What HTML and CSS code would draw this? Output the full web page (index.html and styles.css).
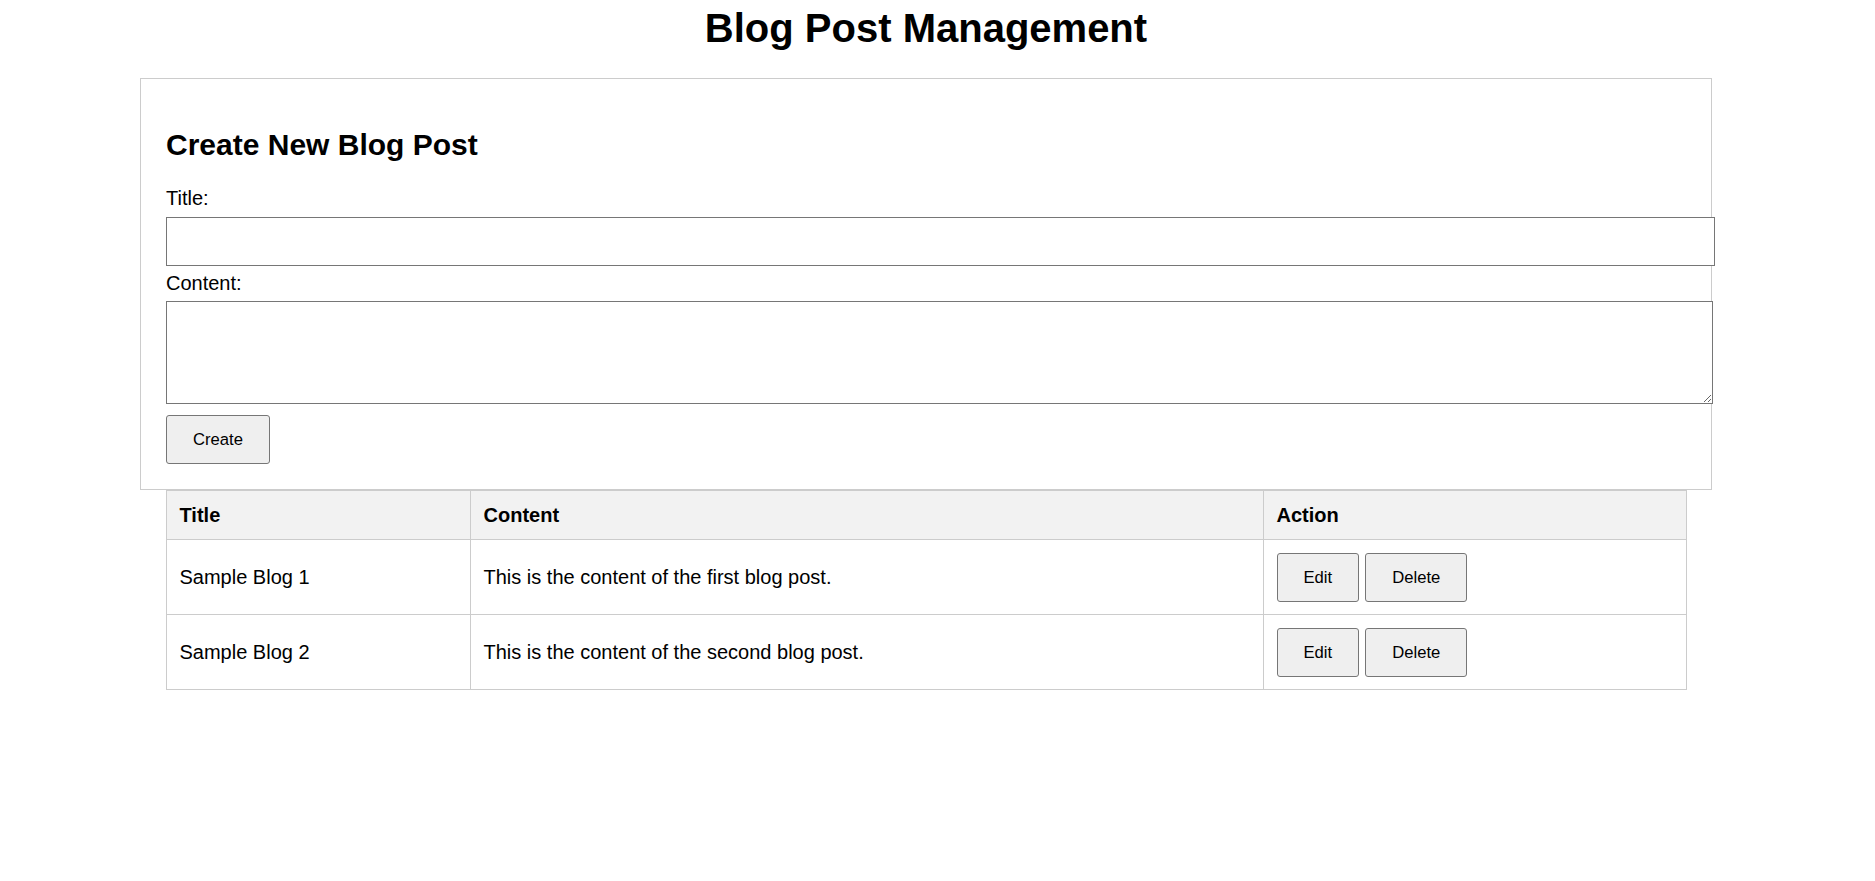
FILE: index.html
```html
<!DOCTYPE html>
<html lang="en">
<head>
<meta charset="utf-8">
<title>Blog Post Management</title>
<link rel="stylesheet" href="styles.css">
</head>
<body>
<div class="page">
  <h1 class="page-title">Blog Post Management</h1>
  <form class="post-form">
    <h2 class="form-title">Create New Blog Post</h2>
    <label class="field-label" for="title">Title:</label>
    <input class="text-input" id="title" type="text">
    <label class="field-label" for="content">Content:</label>
    <textarea class="text-area" id="content"></textarea>
    <div class="form-actions"><button type="button" class="btn">Create</button></div>
  </form>
  <table class="posts">
    <colgroup>
      <col class="col-title">
      <col class="col-content">
      <col class="col-action">
    </colgroup>
    <thead>
      <tr><th>Title</th><th>Content</th><th>Action</th></tr>
    </thead>
    <tbody>
      <tr>
        <td>Sample Blog 1</td>
        <td>This is the content of the first blog post.</td>
        <td><div class="actions"><button type="button" class="btn">Edit</button><button type="button" class="btn">Delete</button></div></td>
      </tr>
      <tr>
        <td>Sample Blog 2</td>
        <td>This is the content of the second blog post.</td>
        <td><div class="actions"><button type="button" class="btn">Edit</button><button type="button" class="btn">Delete</button></div></td>
      </tr>
    </tbody>
  </table>
</div>
</body>
</html>
```
FILE: styles.css
```css
html, body {
  margin: 0;
  padding: 0;
  background: #ffffff;
}

body {
  font-family: "Liberation Sans", Arial, sans-serif;
  font-size: 20px;
  color: #000000;
}

.page {
  width: 1520px;
  margin-left: 166px;
  padding-top: 5px;
}

.page-title {
  margin: 0 0 27px;
  font-size: 40px;
  line-height: 46px;
  font-weight: bold;
  text-align: center;
}

.post-form {
  display: flex;
  flex-direction: column;
  align-items: flex-start;
  margin: 0 -26px;
  padding: 25px;
  border: 1px solid #cccccc;
}

.form-title {
  margin: 24px 0 25px;
  font-size: 30px;
  line-height: 34px;
  font-weight: bold;
}

.field-label {
  display: block;
  line-height: 23px;
  margin-bottom: 7px;
}

.text-area + .field-label,
.text-input + .field-label {
  margin-bottom: 6px;
}

.text-input {
  box-sizing: border-box;
  width: calc(100% + 29px);
  height: 49px;
  margin: 0 0 6px;
  padding: 12px;
  border: 1px solid #767676;
  border-radius: 0;
  font-family: "Liberation Sans", Arial, sans-serif;
  font-size: 16.67px;
  background: #ffffff;
}

.text-area {
  box-sizing: border-box;
  width: calc(100% + 27px);
  height: 103px;
  margin: 0 0 11px;
  padding: 12px;
  border: 1px solid #767676;
  border-radius: 0;
  font-family: "Liberation Mono", monospace;
  font-size: 16.67px;
  background: #ffffff;
}

.form-actions {
  display: flex;
}

.btn {
  box-sizing: border-box;
  height: 49px;
  padding: 0 26px;
  border: 1px solid #767676;
  border-radius: 3px;
  background: #efefef;
  color: #000000;
  font-family: "Liberation Sans", Arial, sans-serif;
  font-size: 16.67px;
  line-height: 47px;
  cursor: pointer;
}

.posts {
  width: 1520px;
  table-layout: fixed;
  border-collapse: collapse;
}

.col-title { width: 304px; }
.col-content { width: 793px; }
.col-action { width: 423px; }

.posts th,
.posts td {
  border: 1px solid #cccccc;
  text-align: left;
  vertical-align: middle;
  line-height: 23px;
}

.posts th {
  padding: 12.5px;
  background: #f2f2f2;
  font-weight: bold;
}

.posts td {
  padding: 12.5px;
}

.actions {
  display: flex;
  gap: 6px;
}
```
